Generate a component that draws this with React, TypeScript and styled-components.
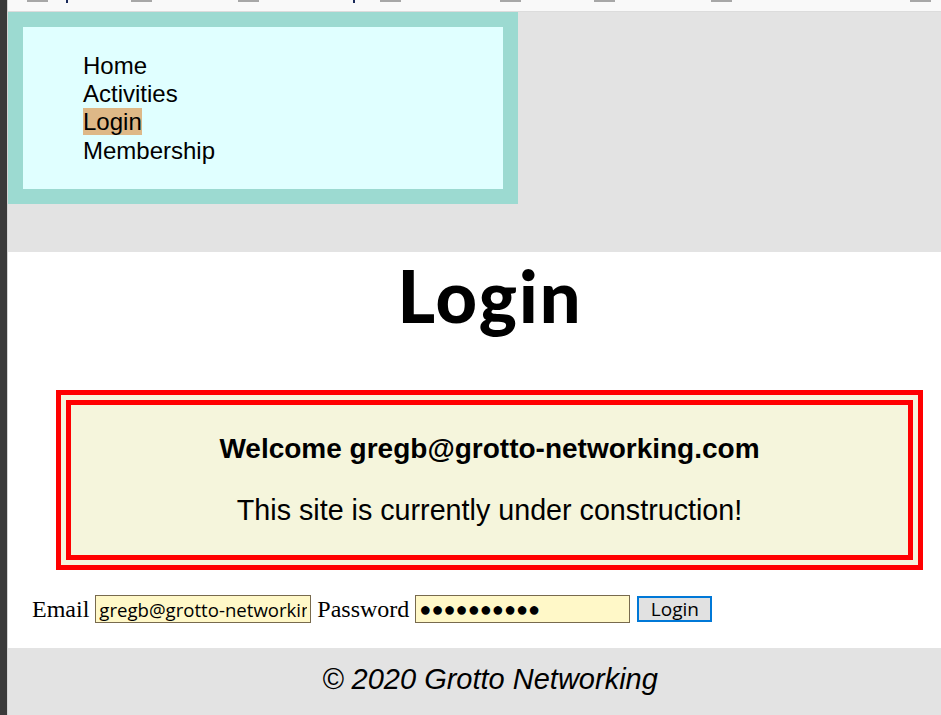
import React from 'react';
import styled, { createGlobalStyle } from 'styled-components';

const GlobalStyle = createGlobalStyle`
  html, body {
    margin: 0;
    padding: 0;
    background: #ffffff;
    overflow: hidden;
  }
`;

const Window = styled.div`
  display: flex;
  width: 941px;
  height: 715px;
  overflow: hidden;
`;

const LeftEdge = styled.div`
  flex: 0 0 7px;
  background: #3a3a3a;
  border-right: 1px solid #d4d4d4;
`;

const Viewport = styled.div`
  flex: 1;
  display: flex;
  flex-direction: column;
  overflow: hidden;
`;

const TopBar = styled.div`
  flex: 0 0 11px;
  background: #f9f9f9;
  border-bottom: 1px solid #dcdcdc;
  svg {
    display: block;
  }
`;

const Page = styled.div`
  width: 964px;
  display: flex;
  flex-direction: column;
  font-family: "Liberation Sans", Arial, sans-serif;
  color: #000;
`;

const Header = styled.header`
  height: 240px;
  background: #e3e3e3;
`;

const Nav = styled.nav`
  width: 510px;
  box-sizing: border-box;
  border: 15px solid #9cdad1;
  background: #e0ffff;
  padding: 25px 0 24px 60px;
`;

const NavList = styled.ul`
  list-style: none;
  margin: 0;
  padding: 0;
`;

const NavItem = styled.li`
  font-size: 24px;
  line-height: 28.2px;
`;

const NavLink = styled.a<{ $active?: boolean }>`
  color: #000;
  text-decoration: none;
  background: ${(p) => (p.$active ? '#deb887' : 'transparent')};
`;

const Main = styled.main`
  background: #ffffff;
  padding: 8px 0 25px;
  display: flex;
  flex-direction: column;
`;

const Title = styled.h1`
  margin: 0;
  text-align: center;
  font-family: Lato, "Liberation Sans", sans-serif;
  font-weight: 900;
  font-size: 72px;
  line-height: 71px;
  letter-spacing: 2px;
`;

const Notice = styled.section`
  margin: 59px 49px 0 48px;
  height: 180px;
  box-sizing: border-box;
  border: 15px double #ff0000;
  background: #f5f5dc;
  padding: 28px 0 0;
  text-align: center;
`;

const Welcome = styled.p`
  margin: 0 0 29px;
  font-size: 28px;
  font-weight: bold;
`;

const Construction = styled.p`
  margin: 0;
  font-size: 28.7px;
`;

const LoginForm = styled.form`
  display: flex;
  align-items: center;
  gap: 6px;
  margin: 25px 0 0 24px;
  height: 28px;
`;

const Label = styled.label`
  font-family: "Liberation Serif", "Times New Roman", serif;
  font-size: 24px;
`;

const Field = styled.input<{ $w: number; $dots?: boolean }>`
  box-sizing: border-box;
  width: ${(p) => p.$w}px;
  height: 28px;
  margin: 0;
  padding: 0 3px;
  border: 1px solid #786a4e;
  border-radius: 0;
  background: #fff8c8;
  color: #000;
  font-family: ${(p) => (p.$dots ? '"Liberation Sans", Arial' : '"Open Sans"')}, sans-serif;
  font-size: ${(p) => (p.$dots ? '20px' : '18.6px')};
  outline: none;
`;

const SubmitButton = styled.button`
  box-sizing: border-box;
  width: 75px;
  height: 26px;
  margin-left: 1px;
  padding: 0;
  border: 2px solid #0078d7;
  border-radius: 0;
  background: #e1e1e1;
  color: #000;
  font-family: "Open Sans", sans-serif;
  font-size: 19px;
  line-height: 22px;
`;

const Footer = styled.footer`
  background: #e3e3e3;
  padding: 15px 0 20px;
  text-align: center;
  font-style: italic;
  font-size: 29px;
`;

const tabMarks = [27, 131, 238, 380, 500, 594, 711, 910];

export default function App(): JSX.Element {
  return (
    <React.Fragment>
      <GlobalStyle />
      <Window>
        <LeftEdge />
        <Viewport>
          <TopBar>
            <svg width="933" height="11" viewBox="0 0 933 11">
              {tabMarks.map((x) => (
                <rect key={x} x={x - 8} y={0} width={21} height={2} fill="#a7a7a7" />
              ))}
              <rect x={58} y={0} width={2} height={3} fill="#1a2a5a" />
              <rect x={345} y={0} width={2} height={3} fill="#1a2a5a" />
            </svg>
          </TopBar>
          <Page>
            <Header>
              <Nav>
                <NavList>
                  <NavItem><NavLink href="#">Home</NavLink></NavItem>
                  <NavItem><NavLink href="#">Activities</NavLink></NavItem>
                  <NavItem><NavLink href="#" $active>Login</NavLink></NavItem>
                  <NavItem><NavLink href="#">Membership</NavLink></NavItem>
                </NavList>
              </Nav>
            </Header>
            <Main>
              <Title>Login</Title>
              <Notice>
                <Welcome>Welcome gregb@grotto-networking.com</Welcome>
                <Construction>This site is currently under construction!</Construction>
              </Notice>
              <LoginForm onSubmit={(e) => e.preventDefault()}>
                <Label htmlFor="email">Email</Label>
                <Field id="email" $w={216} type="text" defaultValue="gregb@grotto-networking.com" />
                <Label htmlFor="password">Password</Label>
                <Field id="password" $w={215} $dots type="text" readOnly value="●●●●●●●●●●" />
                <SubmitButton type="submit">Login</SubmitButton>
              </LoginForm>
            </Main>
            <Footer>© 2020 Grotto Networking</Footer>
          </Page>
        </Viewport>
      </Window>
    </React.Fragment>
  );
}
